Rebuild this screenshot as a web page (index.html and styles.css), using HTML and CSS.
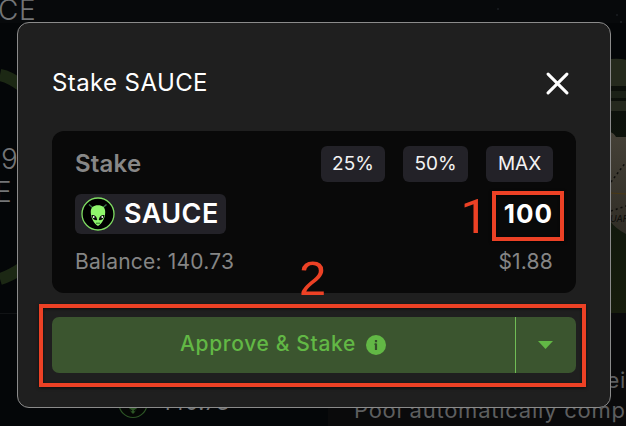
FILE: index.html
```html
<!DOCTYPE html>
<html lang="en">
<head>
<meta charset="utf-8">
<title>Stake SAUCE</title>
<link rel="stylesheet" href="styles.css">
</head>
<body>
<svg class="backdrop" viewBox="0 0 626 426" aria-hidden="true">
  <defs>
    <linearGradient id="ground" x1="0" y1="0" x2="0" y2="1">
      <stop offset="0" stop-color="#0b0e0a"/>
      <stop offset=".55" stop-color="#10170d"/>
      <stop offset="1" stop-color="#171d0d"/>
    </linearGradient>
    <linearGradient id="suit" x1="0" y1="0" x2="0" y2="1">
      <stop offset="0" stop-color="#454137"/>
      <stop offset="1" stop-color="#302d26"/>
    </linearGradient>
  </defs>
  <rect width="626" height="426" fill="#040608"/>
  <rect width="626" height="23" fill="#07090b"/>
  <rect x="328" y="313" width="298" height="113" fill="#0a0a0b"/>
  <path d="M0 313.500H18" stroke="#111315"/>
  <path d="M0 75Q10 77 22 86M0 279Q10 276 22 268" fill="none" stroke="#1c2814" stroke-width="12"/>
  <rect x="610" y="59" width="16" height="254" fill="url(#ground)"/>
  <path d="M610 59Q620 58 626 60V86H610Z" fill="#252a1d"/>
  <path d="M610 91H626V98H610Z" fill="#1b2117"/>
  <path d="M610 101H626V111H610Z" fill="#25291e"/>
  <path d="M610 132Q614 133 616 137H626V234Q616 229 610 221Z" fill="url(#suit)"/>
  <path d="M611 182L626 162M611 211L626 206" stroke="#0d0d0b" stroke-width="1.500" stroke-dasharray="2 3"/>
  <path d="M611 193L626 194" stroke="#4a3915"/>
  <text x="610" y="222" class="suit-name">UAR</text>
  <g fill="#30363a"><circle cx="498" cy="9" r=".7"/><circle cx="617" cy="15" r=".7"/><circle cx="621" cy="22" r=".8"/></g>
  <g class="back-text">
    <text x="-2" y="20" class="back-large">CE</text>
    <text x="1" y="169" class="back-large">9</text>
    <text x="-5" y="202" class="back-large">E</text>
    <text x="162" y="410" class="back-medium">140.73</text>
    <text x="606.500" y="388" class="back-small">eive</text>
    <text x="354" y="418" class="back-small">Pool automatically comp</text>
  </g>
  <circle cx="133" cy="403.500" r="14" fill="#050705" stroke="#2d5526" stroke-width="1.200"/>
  <path d="M127 401Q129 411 133 414Q137 411 139 401Z" fill="#2d5526"/>
  <path d="M129 409L132 411M137 409L134 411" stroke="#081008" stroke-width="1.500"/>
</svg>

<main class="modal">
  <header class="modal-header">
    <h1 class="title">Stake SAUCE</h1>
    <svg class="close" viewBox="0 0 22 22" role="img" aria-label="Close"><path d="M2 2L20 20M20 2L2 20"/></svg>
  </header>

  <section class="card">
    <div class="row">
      <h2 class="label">Stake</h2>
      <div class="chips">
        <span class="chip">25%</span>
        <span class="chip chip-mid">50%</span>
        <span class="chip chip-max">MAX</span>
      </div>
    </div>
    <div class="row token-row">
      <div class="token">
        <svg class="token-icon" viewBox="0 0 34 34" aria-hidden="true">
          <circle cx="17" cy="17" r="16" fill="#000" stroke="#7fdc62" stroke-width="1.300"/>
          <path d="M8 7.500L12 11M25.500 7.500L21.500 11" stroke="#397143" stroke-width="1.500"/>
          <path d="M9.800 15.500C9.500 10.500 12.500 8.300 17 8.300S24.500 10.500 24.200 15.500C24 21.500 21 26.500 17 29C13 26.500 10 21.500 9.800 15.500Z" fill="#8ff66c"/>
          <path d="M10.500 18Q15.500 17.500 16.200 23Q11.500 24 10.500 18ZM23.500 18Q18.500 17.500 17.800 23Q22.500 24 23.500 18Z" fill="#080c08"/>
          <path d="M15 26.200H19" stroke="#2b6a2a"/>
          <circle cx="12.700" cy="20" r=".9" fill="#fff"/><circle cx="21.300" cy="20" r=".9" fill="#fff"/>
        </svg>
        <span class="token-name">SAUCE</span>
      </div>
      <span class="amount">100<span class="mark mark-amount"></span><span class="number number-one">1</span></span>
    </div>
    <div class="row details">
      <span class="balance">Balance: 140.73</span>
      <span class="price">$1.88</span>
    </div>
  </section>

  <div class="action">
    <div class="approve">
      <span class="approve-text">Approve &amp; Stake</span>
      <svg class="info" viewBox="0 0 20 20" aria-hidden="true"><circle cx="10" cy="10" r="10" fill="#62b845"/><path d="M10 5V7.200M10 8.500V15" fill="none" stroke="#34502a" stroke-width="2.200"/><path d="M8.500 9.300H10" stroke="#34502a" stroke-width="1.600"/></svg>
    </div>
    <div class="menu"><svg class="arrow" viewBox="0 0 15 8" aria-hidden="true"><path d="M0 0H15L7.500 8Z"/></svg></div>
    <span class="mark mark-action"></span>
    <span class="number number-two">2</span>
  </div>
</main>
</body>
</html>
```

FILE: styles.css
```css
* { box-sizing: border-box; }

body {
  margin: 0;
  width: 626px;
  height: 426px;
  overflow: hidden;
  background: #040608;
  font-family: Inter, "Liberation Sans", sans-serif;
}

.backdrop {
  position: absolute;
  inset: 0;
  width: 626px;
  height: 426px;
}

.back-text { fill: #747577; }
.back-large { font-size: 28px; font-weight: 300; letter-spacing: .6px; }
.back-medium { font-size: 21px; letter-spacing: .5px; }
.back-small { font-size: 22px; letter-spacing: .75px; fill: #5d5e5f; }
.suit-name { font-size: 9px; font-style: italic; fill: #0b0b09; }

.modal {
  position: relative;
  width: 594px;
  height: 386px;
  margin: 22px 0 0 17px;
  padding: 0 34px;
  border: 1px solid #8b8b8b;
  border-radius: 12px;
  background: #1f1f1f;
}

.modal-header {
  display: flex;
  align-items: center;
  justify-content: space-between;
  height: 108px;
  padding: 12px 7px 0 0;
}

.title {
  margin: 0;
  color: #fff;
  font-size: 24px;
  font-weight: 400;
  line-height: 28px;
  letter-spacing: .4px;
}

.close { width: 23px; height: 23px; }
.close path { fill: none; stroke: #fff; stroke-width: 2.9; stroke-linecap: round; }

.card {
  height: 162px;
  padding: 15px 23px 0;
  border-radius: 12px;
  background: #090909;
}

.row {
  display: flex;
  align-items: center;
  justify-content: space-between;
}

.label { margin: 0; color: #878787; font-size: 24px; font-weight: 600; line-height: 36px; letter-spacing: .2px; }
.chips { display: flex; gap: 18px; }

.chip {
  width: 64px;
  height: 36px;
  border-radius: 6px;
  background: #232228;
  color: #f3f3f3;
  font-size: 19px;
  line-height: 35px;
  letter-spacing: 0;
  text-align: center;
}

.chip-mid { width: 65px; }
.chip-max { width: 67px; }
.token-row { margin-top: 12px; }

.token {
  display: flex;
  align-items: center;
  gap: 9px;
  width: 151px;
  height: 40px;
  padding-left: 6px;
  border-radius: 6px;
  background: #232228;
}

.token-icon { width: 34px; height: 34px; }
.token-name { color: #fff; font-size: 27px; font-weight: 600; line-height: 38px; letter-spacing: .45px; }
.amount { position: relative; color: #fff; font-size: 26px; font-weight: 700; line-height: 40px; letter-spacing: 1px; }
.details { height: 54px; color: #858585; font-size: 21px; font-weight: 400; letter-spacing: .2px; }

.action {
  position: relative;
  display: flex;
  height: 56px;
  margin-top: 24px;
  border-radius: 7px;
  background: #3b552f;
}

.approve {
  display: flex;
  flex: 1;
  align-items: center;
  justify-content: center;
  gap: 10px;
  padding-right: 1px;
}

.approve-text { color: #62b845; font-size: 21px; font-weight: 450; letter-spacing: .65px; line-height: 52px; margin-top: -2px; }
.info { width: 20px; height: 20px; }

.menu {
  display: flex;
  align-items: center;
  justify-content: center;
  width: 61px;
  padding-right: 1px;
  border-left: 1px solid #70bd55;
}

.arrow { width: 15px; height: 8px; fill: #62b845; }

.mark {
  position: absolute;
  border: 4px solid #ec4125;
  box-shadow: 0 1px 3px #0009, inset 0 1px 3px #0009;
}

.mark-amount { top: -3px; right: -11px; width: 72px; height: 50px; }
.mark-action { top: -13px; left: -13px; width: 547px; height: 83px; }

.number {
  position: absolute;
  color: #ec4125;
  font-family: "Liberation Sans", sans-serif;
  font-size: 49px;
  font-weight: 400;
  line-height: 48px;
  letter-spacing: 0;
}

.number-one { top: -1px; right: 65px; font-family: Roboto, sans-serif; }
.number-two { top: -63px; left: 247px; }
```
